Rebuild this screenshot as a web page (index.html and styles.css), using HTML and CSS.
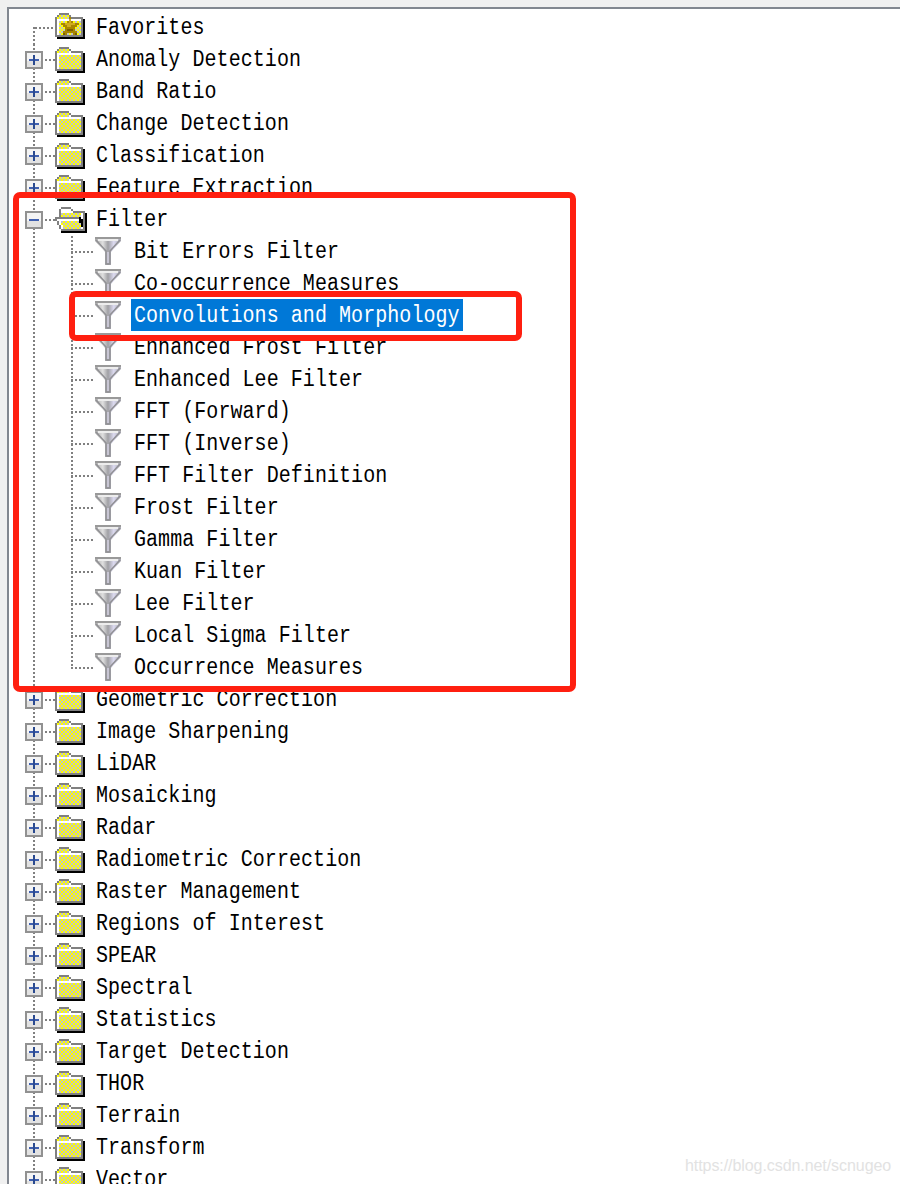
FILE: index.html
```
<!DOCTYPE html>
<html lang="en">
<head>
    <meta charset="UTF-8">
    <title>Toolbox</title>
    <link rel="stylesheet" href="styles.css">
</head>
<body>
    <svg class="defs" width="0" height="0">
        <defs>
            <pattern id="dither" width="4" height="4" patternUnits="userSpaceOnUse">
                <rect width="4" height="4" fill="#ffff00"/>
                <rect width="2" height="2" fill="#c3c3c3"/>
                <rect x="2" y="2" width="2" height="2" fill="#c3c3c3"/>
            </pattern>
            <linearGradient id="metal">
                <stop offset="0" stop-color="#a8a8a8"/>
                <stop offset=".3" stop-color="#e0e0e0"/>
                <stop offset=".5" stop-color="#a0a0a4"/>
                <stop offset=".72" stop-color="#dcdaf0"/>
                <stop offset="1" stop-color="#a8a8b0"/>
            </linearGradient>
            <symbol id="folder" viewBox="0 0 30 26">
                <path d="M2 6h28v20H2z" fill="#000"/>
                <path d="M0 4h2V2h2V0h10v2h2v2h12v20H0z" fill="#808080"/>
                <path d="M2 4h2V2h10v2h2v2h10v16H2z" fill="#fff"/>
                <path d="M2 4h2V2h10v4H2zM4 8h22v14H4z" fill="url(#dither)"/>
            </symbol>
            <symbol id="star" viewBox="0 0 30 26">
                <path d="M2 6h28v20H2z" fill="#000"/>
                <path d="M0 4h2V2h2V0h10v2h2v2h12v20H0z" fill="#808080"/>
                <path d="M2 4h2V2h10v2h2v2h10v16H2z" fill="#fff"/>
                <path d="M2 4h2V2h10v4H2zM4 8h22v14H4z" fill="url(#dither)"/>
                <path d="M14 4h2v4h2v2h6v2h-2v2h-2v4h2v4h-4v-2h-6v2H8v-4h2v-4H8v-2H6v-2h6V8h2z" fill="#a88600"/>
                <path d="M14 6h2v4h4v2h-4v2h-4v-2h-2v-2h4z" fill="#d0ac20"/>
                <path d="M12 16h6v2h-6zM8 20h2v2H8zM20 20h2v2h-2z" fill="#7c5e00"/>
            </symbol>
            <symbol id="open" viewBox="0 0 32 26">
                <path d="M6 6h26v20H6z" fill="#000"/>
                <path d="M4 2h2V0h10v2h2v2h12v20H6v-2H4v-4H2v-4H0v-4h4z" fill="#808080"/>
                <path d="M6 2h10v2h2v2h10v16H6v-4H4v-4H2v-2h4z" fill="#fff"/>
                <path d="M6 6h20v4H6z" fill="url(#dither)"/>
                <path d="M2 10h22v2H2z" fill="#808080"/>
                <path d="M6 14h18v2h2v6H8v-4H6z" fill="url(#dither)"/>
                <path d="M24 10h2v2h2v8h-2v-4h-2z" fill="#000"/>
            </symbol>
            <symbol id="funnel" viewBox="0 0 26 28">
                <path d="M0 0h26v4L16 15v13h-6V15L0 4z" fill="url(#metal)"/>
                <path d="M0 1h26" stroke="#999" stroke-width="2"/>
                <path d="M3 3h20" stroke="#ededed" stroke-width="2"/>
                <path d="M1 3l10 11v13h4V14L25 3" fill="none" stroke="#909094" stroke-width="1.5"/>
                <path d="M13 15v11" stroke="#c8c6d4" stroke-width="2"/>
            </symbol>
        </defs>
    </svg>

    <div class="panel">
        <ul class="tree" id="tree"></ul>
        <div class="mark mark-group"></div>
        <div class="mark mark-item"></div>
        <div class="watermark">https://blog.csdn.net/scnugeo</div>
    </div>

    <script src="tree.js"></script>
</body>
</html>
```
FILE: styles.css
```
body {
    margin: 0;
    height: 1184px;
    overflow: hidden;
    background-color: #f0f0f0;
}
.defs {
    position: absolute;
}
.panel {
    margin: 7px 0 0 7px;
    height: 1177px;
    box-sizing: border-box;
    border-left: 2px solid #828790;
    border-top: 2px solid #828790;
    background: white;
    overflow: hidden;
}
.tree {
    list-style: none;
    margin: 0;
    padding: 3px 0 0 16px;
    font-family: "Liberation Mono", monospace;
    font-size: 20px;
    color: #000;
}
.row {
    display: flex;
    height: 32px;
}
/* expander column with the dotted trunk */
.trunk {
    width: 18px;
    height: 32px;
    flex: none;
    background: repeating-linear-gradient(#808080 0 2px, transparent 2px 4px) 8px 0 / 2px 32px no-repeat;
}
.first .trunk {
    background-position: 8px 15px;
}
.box {
    display: block;
    margin-top: 7px;
}
.dots {
    flex: none;
    width: 10px;
    height: 2px;
    margin: 15px 0 0 2px;
    background: repeating-linear-gradient(90deg, #808080 0 2px, transparent 2px 4px);
}
.first .dots {
    width: 20px;
    margin-left: -8px;
}
.folder {
    flex: none;
    width: 30px;
    height: 26px;
    margin-top: 3px;
    shape-rendering: crispEdges;
}
.first .folder {
    margin-top: 1px;
}
.open {
    width: 32px;
}
.name {
    margin-left: 11px;
    line-height: 32px;
    white-space: pre;
    letter-spacing: 0.06px;
    transform: scaleY(1.15);
}
.open + .name {
    margin-left: 9px;
}
.child .twig {
    flex: none;
    width: 22px;
    height: 32px;
    margin-left: 28px;
    background:
        repeating-linear-gradient(#808080 0 2px, transparent 2px 4px) 0 0 / 2px 32px no-repeat,
        repeating-linear-gradient(90deg, #808080 0 2px, transparent 2px 4px) 0 15px / 22px 2px no-repeat;
}
.last .twig {
    background-size: 2px 16px, 22px 2px;
}
.funnel {
    flex: none;
    width: 26px;
    height: 28px;
    margin: 1px 0 0 2px;
}
.child .name {
    margin-left: 10px;
    padding: 0 3px;
}
.selected .name {
    height: 32px;
    margin-top: -1px;
    line-height: 34px;
    color: white;
    background: #0078d7;
    transform: none;
}
.selected .name span {
    display: block;
    transform: scaleY(1.15);
}
/* red annotation frames over the tree */
.mark {
    position: absolute;
    box-sizing: border-box;
    border: 6px solid #ff1f10;
    border-radius: 7px;
}
.mark-group {
    left: 13px;
    top: 192px;
    width: 563px;
    height: 500px;
}
.mark-item {
    left: 69px;
    top: 291px;
    width: 453px;
    height: 50px;
}
.watermark {
    position: absolute;
    left: 685px;
    top: 1157px;
    font: 16px/18px "Liberation Sans", Arial, sans-serif;
    letter-spacing: -0.07px;
    color: #e2e2e2;
}
```
FILE: tree.js
```
const tree = document.getElementById('tree');

const before = ['Anomaly Detection', 'Band Ratio', 'Change Detection', 'Classification', 'Feature Extraction'];
const filters = ['Bit Errors Filter', 'Co-occurrence Measures', 'Convolutions and Morphology',
    'Enhanced Frost Filter', 'Enhanced Lee Filter', 'FFT (Forward)', 'FFT (Inverse)',
    'FFT Filter Definition', 'Frost Filter', 'Gamma Filter', 'Kuan Filter', 'Lee Filter',
    'Local Sigma Filter', 'Occurrence Measures'];
const after = ['Geometric Correction', 'Image Sharpening', 'LiDAR', 'Mosaicking', 'Radar',
    'Radiometric Correction', 'Raster Management', 'Regions of Interest', 'SPEAR', 'Spectral',
    'Statistics', 'Target Detection', 'THOR', 'Terrain', 'Transform', 'Vector'];

function box(opened) {
    const plus = opened ? '' : '<path d="M8 4h2v10H8z" fill="#2a4a90"/>';
    return `<svg class="box" width="18" height="18">
        <rect x="1" y="1" width="16" height="16" fill="#f4f4f4" stroke="#919191" stroke-width="2"/>
        <path d="M2 10h14v6H2z" fill="#e2e2e2"/>
        <path d="M4 8h10v2H4z" fill="#4060b0"/>${plus}</svg>`;
}

function folder(name, icon, cls) {
    const expander = icon === 'star' ? '' : box(icon === 'open');
    return `<li class="row ${cls}"><div class="trunk">${expander}</div><div class="dots"></div>
        <svg class="folder ${icon}"><use href="#${icon}"/></svg><div class="name">${name}</div></li>`;
}

function child(name, cls) {
    return `<li class="row child ${cls}"><div class="trunk"></div><div class="twig"></div>
        <svg class="funnel"><use href="#funnel"/></svg><div class="name"><span>${name}</span></div></li>`;
}

let html = folder('Favorites', 'star', 'first');
before.forEach(n => html += folder(n, 'folder', ''));
html += folder('Filter', 'open', '');
filters.forEach((n, i) => {
    const cls = i === 2 ? 'selected' : i === filters.length - 1 ? 'last' : '';
    html += child(n, cls);
});
after.forEach(n => html += folder(n, 'folder', ''));
tree.innerHTML = html;
```
